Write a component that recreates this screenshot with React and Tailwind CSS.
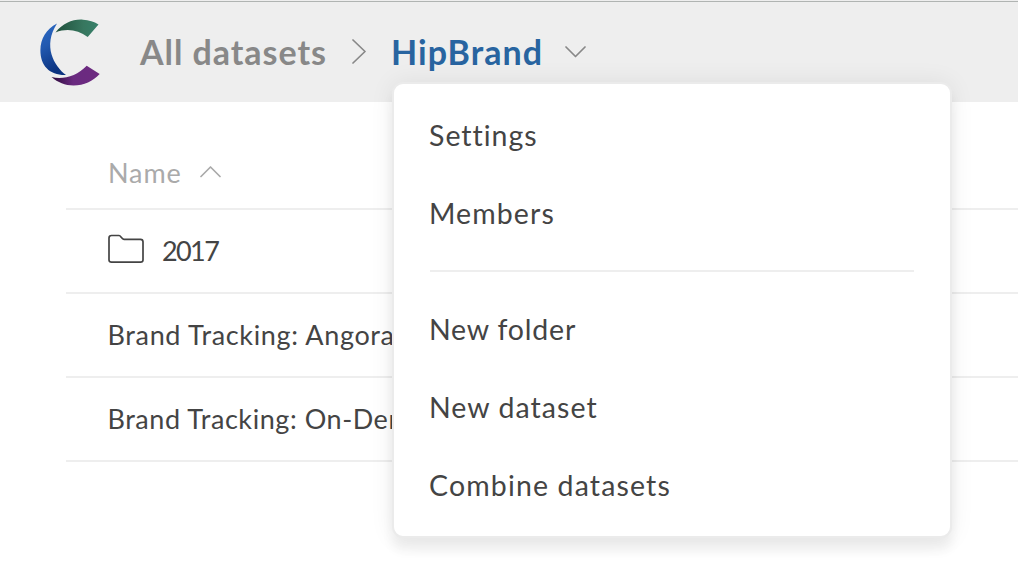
function Logo() {
  return (
    <svg width="62" height="68" viewBox="0 0 62 68" className="shrink-0">
      <defs>
        <linearGradient id="logoGreen" x1="0" y1="0" x2="1" y2="0">
          <stop offset="0" stopColor="#1f4f3b" />
          <stop offset="0.65" stopColor="#37775f" />
          <stop offset="1" stopColor="#37806a" />
        </linearGradient>
        <linearGradient id="logoBlue" x1="0" y1="0" x2="0.3" y2="1">
          <stop offset="0" stopColor="#2a69c4" />
          <stop offset="0.45" stopColor="#2259b0" />
          <stop offset="1" stopColor="#0b3380" />
        </linearGradient>
        <linearGradient id="logoPurple" x1="0" y1="0" x2="1" y2="0">
          <stop offset="0" stopColor="#2c0a3a" />
          <stop offset="0.45" stopColor="#6a2a80" />
          <stop offset="1" stopColor="#6d2a80" />
        </linearGradient>
      </defs>
      <path d="M15.5 13.500 C23 4 33 0 43 0.700 C49 1 54 2.500 58.500 5.500 L47.700 18 C38 11 27 9 15.500 13.500 Z" fill="url(#logoGreen)" />
      <path d="M17 4.500 C6 10 0.500 20 0.400 31 C0.200 47 10 56.500 26 56 C14 47 2.500 27 17 4.500 Z" fill="url(#logoBlue)" />
      <path d="M11.500 58 C23 61 37 57 46.700 46.700 L59.700 55 C53 62 44 66.500 33.500 66.500 C25 66.500 18 63.500 11.500 58 Z" fill="url(#logoPurple)" />
    </svg>
  );
}

function Chevron({ points, width, height, className }) {
  return (
    <svg width={width} height={height} className={className} fill="none" stroke="currentColor" strokeWidth="1.7" strokeLinecap="round" strokeLinejoin="round">
      <polyline points={points} />
    </svg>
  );
}

function FolderIcon() {
  return (
    <svg width="36" height="30" viewBox="0 0 36 30" className="mr-[18px] mb-[2px] shrink-0" fill="none" stroke="#444" strokeWidth="1.7" strokeLinejoin="round">
      <path d="M1 26 V4 Q1 1.500 3.500 1.500 H11 C13 1.500 13.500 5.300 16 5.300 H32.500 Q35 5.300 35 7.800 V26 Q35 28.200 32.500 28.200 H3.500 Q1 28.200 1 26 Z" />
    </svg>
  );
}

function MenuItem({ children, className }) {
  return <div className={`flex h-[78px] items-center pl-[35px] ${className}`}>{children}</div>;
}

export default function App() {
  return (
    <div className="relative h-[578px] w-[1018px] overflow-hidden bg-white font-['Lato',sans-serif] whitespace-nowrap text-[#444]">
      <div className="h-px bg-[#eee]" />
      <header className="flex h-[101px] items-start border-t border-[#b0b4b2] bg-[#eee] pl-10 text-[34px] leading-[40px] font-bold">
        <div className="pt-[17px]">
          <Logo />
        </div>
        <div className="flex items-center pt-[30px] pl-[38px]">
          <span className="w-[212px] tracking-[0.95px] text-[#888]">All datasets</span>
          <Chevron points="1,1 13,12.5 1,24" width="14" height="25" className="mb-[2px] text-[#888]" />
          <span className="ml-[25px] w-[174px] tracking-[1.05px] text-[#2864a0]">HipBrand</span>
          <Chevron points="1,1 10.5,10.500 20,1" width="21" height="12" className="mb-[1px] text-[#888]" />
        </div>
      </header>

      <main className="ml-[66px] text-[27px] leading-[32px]">
        <div className="flex h-[108px] items-end border-b-2 border-[#eee] pb-[19px] pl-[42px] text-[#aaa]">
          <span className="w-[92px] tracking-[0.9px]">Name</span>
          <Chevron points="1,10.500 10.500,1 20,10.500" width="21" height="12" className="mb-[11px]" />
        </div>
        <div className="flex h-[84px] items-center border-b-2 border-[#eee] pb-[3px] pl-[42px]">
          <FolderIcon />
          <span className="pt-[2px] tracking-[-1.6px]">2017</span>
        </div>
        <div className="flex h-[84px] items-center border-b-2 border-[#eee] pb-px pl-[41.500px] tracking-[0.65px]">Brand Tracking: Angora</div>
        <div className="flex h-[84px] items-center border-b-2 border-[#eee] pb-px pl-[41.500px] tracking-[0.55px]">Brand Tracking: On-Demand</div>
      </main>

      <div className="absolute top-[82px] left-[392px] h-[456px] w-[560px] rounded-[11px] border-2 border-[#ebebeb] bg-white py-3 text-[28.5px] leading-[34px] shadow-[0_12px_12px_rgba(0,0,0,0.06),0_0_24px_rgba(0,0,0,0.07)]">
        <MenuItem className="tracking-[1px]">Settings</MenuItem>
        <MenuItem className="tracking-[1.1px]">Members</MenuItem>
        <div className="mx-[36px] my-[18px] h-[2px] bg-[#eee]" />
        <MenuItem className="tracking-[0.8px]">New folder</MenuItem>
        <MenuItem className="tracking-[1.05px]">New dataset</MenuItem>
        <MenuItem className="tracking-[1.15px]">Combine datasets</MenuItem>
      </div>
    </div>
  );
}
